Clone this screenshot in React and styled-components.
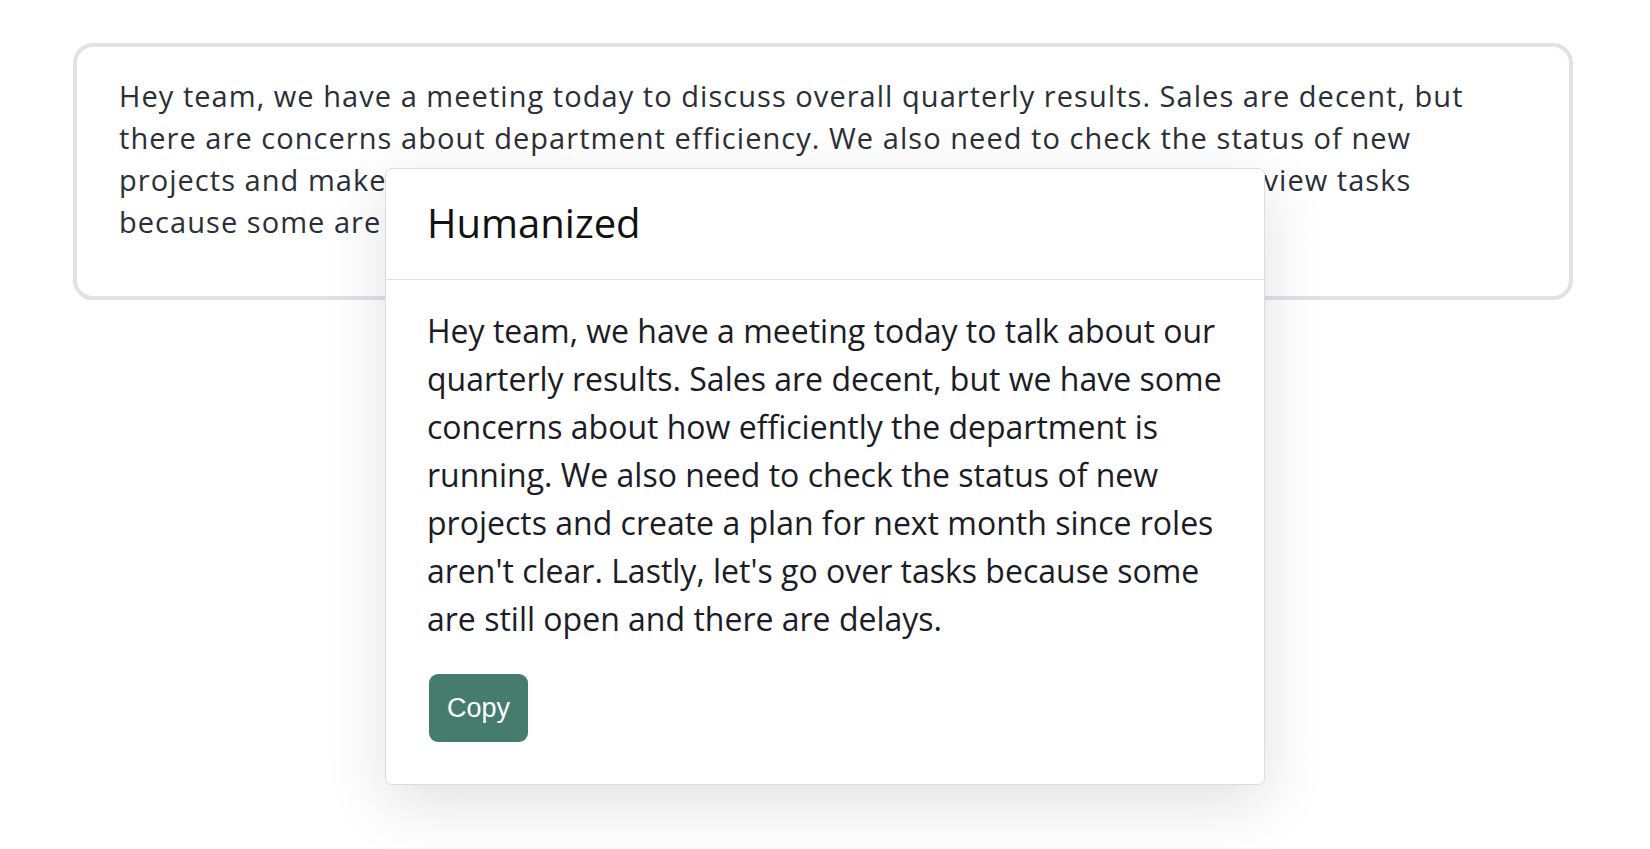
import React from "react";
import styled, { createGlobalStyle } from "styled-components";

const Global = createGlobalStyle`
  html, body { margin: 0; padding: 0; background: #ffffff; }
  body { font-family: "Open Sans", "Noto Sans", sans-serif; }
  * { box-sizing: border-box; }
`;

const Page = styled.div`
  position: relative;
  width: 1650px;
  height: 849px;
  padding: 43px 77px 0 73px;
  background: #ffffff;
`;

const InputCard = styled.div`
  width: 1500px;
  min-height: 257px;
  border: 4px solid #e1e1e6;
  border-radius: 20px;
  padding: 28px 20px 40px 42px;
  background: #ffffff;
`;

const InputText = styled.p`
  margin: 0;
  font-family: "Open Sans", sans-serif;
  font-size: 29px;
  line-height: 42px;
  letter-spacing: 0.036em;
  color: #2b2f36;
`;

const Modal = styled.div`
  position: absolute;
  top: 168px;
  left: 50%;
  transform: translateX(-50%);
  width: 880px;
  background: #ffffff;
  border: 1px solid #dcdce0;
  border-radius: 7px;
  box-shadow: 0 18px 64px rgba(0, 0, 0, 0.12);
  display: flex;
  flex-direction: column;
`;

const ModalHeader = styled.div`
  padding: 24px 41px 26px;
  border-bottom: 1px solid #e0e0e4;
`;

const ModalTitle = styled.h2`
  margin: 0;
  font-family: "Open Sans", sans-serif;
  font-weight: 400;
  font-size: 40px;
  line-height: 60px;
  color: #111111;
`;

const ModalBody = styled.div`
  padding: 27px 41px 42px;
  display: flex;
  flex-direction: column;
  align-items: flex-start;
  gap: 31px;
`;

const BodyText = styled.p`
  margin: 0;
  font-family: "Open Sans", sans-serif;
  font-size: 32px;
  line-height: 48px;
  color: #1c1c26;
`;

const CopyButton = styled.button`
  height: 68px;
  padding: 0 18px;
  margin-left: 2px;
  border: none;
  border-radius: 9px;
  background: #467c6e;
  color: #ffffff;
  font-family: "Liberation Sans", Arial, sans-serif;
  font-size: 27px;
  cursor: pointer;
`;

const inputLines = [
  "Hey team, we have a meeting today to discuss overall quarterly results. Sales are decent, but",
  "there are concerns about department efficiency. We also need to check the status of new",
  "projects and make a plan for next month since roles are unclear. Lastly, let's review tasks",
  "because some are still open and there are delays.",
];

export default function App() {
  return (
    <>
      <Global />
      <Page>
        <InputCard>
          <InputText>
            {inputLines.map((line, i) => (
              <React.Fragment key={i}>
                {line}
                {i < inputLines.length - 1 && <br />}
              </React.Fragment>
            ))}
          </InputText>
        </InputCard>
        <Modal>
          <ModalHeader>
            <ModalTitle>Humanized</ModalTitle>
          </ModalHeader>
          <ModalBody>
            <BodyText>
              Hey team, we have a meeting today to talk about our quarterly results. Sales are decent, but
              we have some concerns about how efficiently the department is running. We also need to check
              the status of new projects and create a plan for next month since roles aren't clear. Lastly,
              let's go over tasks because some are still open and there are delays.
            </BodyText>
            <CopyButton>Copy</CopyButton>
          </ModalBody>
        </Modal>
      </Page>
    </>
  );
}
